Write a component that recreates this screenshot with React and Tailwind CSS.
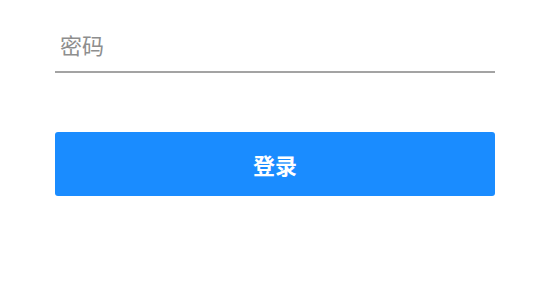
export default function App() {
  return (
    <div className="w-[550px] h-[299px] bg-white px-[55px] pt-4" style={{ fontFamily: '"Noto Sans CJK SC", "Noto Sans", sans-serif' }}>
      <div className="flex flex-col">
        <input
          type="password"
          placeholder="密码"
          className="h-[57px] w-full border-b-2 border-[#a3a3a3] bg-transparent pl-[5px] text-[22px] text-[#333] outline-none placeholder:text-[#8e8e8e]"
        />
        <button className="mt-[59px] flex h-[64px] w-full items-center justify-center rounded-[3px] bg-[#1a8cff] text-[22px] font-bold text-white">
          登录
        </button>
      </div>
    </div>
  );
}
